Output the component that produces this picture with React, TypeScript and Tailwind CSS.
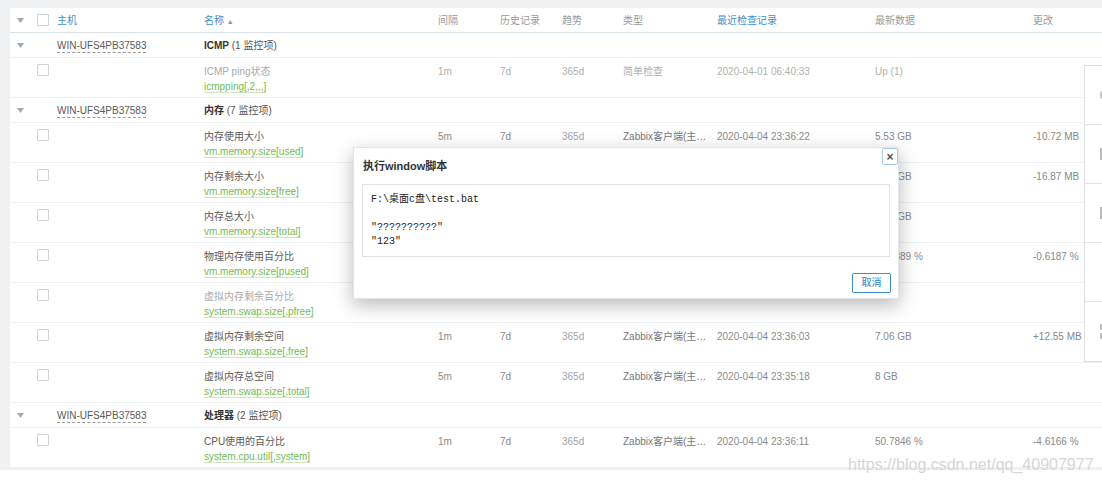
import React from 'react'

// 11 列：折叠箭头 / 勾选 / 主机 / 名称 / 间隔 / 历史 / 趋势 / 类型 / 最近检查 / 最新数据 / 更改
const COLS = 'grid grid-cols-[20px_27px_147px_234px_62px_62px_61px_94px_158px_158px_1fr]'

type Item = {
  kind: 'item'
  name: string
  key: string
  interval?: string
  history?: string
  trends?: string
  type?: string
  last?: string
  value?: string
  change?: string
  dim?: boolean
}
type Group = { kind: 'group'; title: string; count: string }

const ROWS: (Item | Group)[] = [
  { kind: 'group', title: 'ICMP', count: '(1 监控项)' },
  {
    kind: 'item', name: 'ICMP ping状态', key: 'icmpping[,2,,,]', interval: '1m', history: '7d', trends: '365d',
    type: '简单检查', last: '2020-04-01 06:40:33', value: 'Up (1)', dim: true,
  },
  { kind: 'group', title: '内存', count: '(7 监控项)' },
  {
    kind: 'item', name: '内存使用大小', key: 'vm.memory.size[used]', interval: '5m', history: '7d', trends: '365d',
    type: 'Zabbix客户端(主…', last: '2020-04-04 23:36:22', value: '5.53 GB', change: '-10.72 MB',
  },
  {
    kind: 'item', name: '内存剩余大小', key: 'vm.memory.size[free]', interval: '1m', history: '7d', trends: '365d',
    type: 'Zabbix客户端(主…', last: '2020-04-04 23:36:04', value: '2.47 GB', change: '-16.87 MB',
  },
  {
    kind: 'item', name: '内存总大小', key: 'vm.memory.size[total]', interval: '5m', history: '7d', trends: '365d',
    type: 'Zabbix客户端(主…', last: '2020-04-04 23:35:22', value: '7.99 GB',
  },
  {
    kind: 'item', name: '物理内存使用百分比', key: 'vm.memory.size[pused]', interval: '1m', history: '7d', trends: '365d',
    type: 'Zabbix客户端(主…', last: '2020-04-04 23:36:05', value: '69.1389 %', change: '-0.6187 %',
  },
  { kind: 'item', name: '虚拟内存剩余百分比', key: 'system.swap.size[,pfree]', dim: true },
  {
    kind: 'item', name: '虚拟内存剩余空间', key: 'system.swap.size[,free]', interval: '1m', history: '7d', trends: '365d',
    type: 'Zabbix客户端(主…', last: '2020-04-04 23:36:03', value: '7.06 GB', change: '+12.55 MB',
  },
  {
    kind: 'item', name: '虚拟内存总空间', key: 'system.swap.size[,total]', interval: '5m', history: '7d', trends: '365d',
    type: 'Zabbix客户端(主…', last: '2020-04-04 23:35:18', value: '8 GB',
  },
  { kind: 'group', title: '处理器', count: '(2 监控项)' },
  {
    kind: 'item', name: 'CPU使用的百分比', key: 'system.cpu.util[,system]', interval: '1m', history: '7d', trends: '365d',
    type: 'Zabbix客户端(主…', last: '2020-04-04 23:36:11', value: '50.7846 %', change: '-4.6166 %',
  },
]

function Arrow() {
  return (
    <svg width="7" height="5" viewBox="0 0 7 5" className="block">
      <path d="M0 0 L7 0 L3.5 5 Z" fill="#a5a9ad" />
    </svg>
  )
}

function Box() {
  return <div className="w-[12px] h-[12px] border border-[#ccd3d9] rounded-[1px] bg-white" />
}

function HeaderRow() {
  return (
    <div className={`${COLS} h-[25px] items-center border-b border-[#dbe3ea] text-[#9a9a9a]`}>
      <div className="flex justify-center">
        <Arrow />
      </div>
      <div className="pl-[7px]">
        <Box />
      </div>
      <div className="text-[#3f8fce]">主机</div>
      <div className="text-[#3f8fce]">
        名称 <span className="text-[7px] text-[#8b9aa6]">▲</span>
      </div>
      <div>间隔</div>
      <div>历史记录</div>
      <div>趋势</div>
      <div>类型</div>
      <div className="text-[#3f8fce]">最近检查记录</div>
      <div>最新数据</div>
      <div>更改</div>
    </div>
  )
}

function GroupRow({ row }: { row: Group }) {
  return (
    <div className={`${COLS} h-[25px] items-center border-b border-[#eef0f2]`}>
      <div className="flex justify-center">
        <Arrow />
      </div>
      <div />
      <div>
        <span className="text-[#5a5a5a] underline decoration-dashed decoration-[#999] underline-offset-[3px]">
          WIN-UFS4PB37583
        </span>
      </div>
      <div className="col-span-8 text-[#555]">
        <b className="text-[#333]">{row.title}</b> {row.count}
      </div>
    </div>
  )
}

function ItemRow({ row }: { row: Item }) {
  const soft = row.dim ? 'text-[#b0b0b0]' : 'text-[#8a8a8a]'
  return (
    <div className={`${COLS} h-[40px] pt-[6px] leading-[15px] border-b border-[#eef0f2] whitespace-nowrap ${soft}`}>
      <div />
      <div className="pl-[7px]">
        <Box />
      </div>
      <div />
      <div>
        <div className={row.dim ? 'text-[#aaa]' : 'text-[#5a5a5a]'}>{row.name}</div>
        <div>
          <span className="text-[#72bb52] underline decoration-[#cde6c0] underline-offset-[2px]">{row.key}</span>
        </div>
      </div>
      <div>{row.interval}</div>
      <div>{row.history}</div>
      <div className={row.dim ? '' : 'text-[#a3a3a3]'}>{row.trends}</div>
      <div className={row.dim ? '' : 'text-[#777]'}>{row.type}</div>
      <div>{row.last}</div>
      <div>{row.value}</div>
      <div className="text-[#888]">{row.change}</div>
    </div>
  )
}

function ScriptDialog() {
  return (
    <div className="absolute left-[353px] top-[147px] w-[546px] h-[152px] bg-white border border-[#e3e6e9] shadow-[0_6px_18px_rgba(0,0,0,0.28)]">
      <button className="absolute right-0 top-0 w-[16px] h-[17px] flex items-center justify-center border border-[#a8cbe9] rounded-[2px] bg-white text-[#555] text-[12px] font-bold leading-none">
        ×
      </button>
      <div className="px-[9px] pt-[9px] text-[11px] font-bold text-[#333] leading-[18px]">执行window脚本</div>
      <div className="mx-[8px] mt-[9px] h-[73px] border border-[#dfe3e6] px-[8px] pt-[8px] font-['Liberation_Mono','Noto_Sans_CJK_SC',monospace] text-[10px] leading-[14px] text-[#222] whitespace-pre">
        {'F:\\桌面c盘\\test.bat\n\n"??????????"\n"123"'}
      </div>
      <div className="flex justify-end px-[7px] pt-[16px]">
        <button className="w-[39px] h-[20px] border border-[#3f8fce] rounded-[2px] text-[#2f7fc0] text-[10px] leading-none bg-white">
          取消
        </button>
      </div>
    </div>
  )
}

function SidePanel() {
  return (
    <div className="absolute left-[1084px] top-[65px] w-[40px] border border-[#dedede] bg-white">
      {[0, 1, 2, 3, 4].map((i) => (
        <div key={i} className="h-[59px] border-b border-[#e3e3e3] last:border-b-0 flex items-center pl-[15px]">
          {i === 0 && <div className="w-[3px] h-[8px] rounded-l-full border-l-2 border-[#c9c9c9]" />}
          {(i === 1 || i === 2) && <div className="w-[4px] h-[12px] bg-[#bdbdbd]" />}
          {i === 4 && (
            <div className="flex flex-col gap-[3px]">
              <div className="w-[3px] h-[6px] bg-[#c2c2c2]" />
              <div className="w-[3px] h-[6px] bg-[#c2c2c2]" />
            </div>
          )}
        </div>
      ))}
    </div>
  )
}

export default function App() {
  return (
    <div className="relative w-[1102px] h-[484px] overflow-hidden bg-white font-['Liberation_Sans','Noto_Sans_CJK_SC',sans-serif] text-[10px]">
      <div className="bg-[#f0f1f2] pl-[10px] pt-[8px] pb-[2px]">
        <div className="bg-white">
          <HeaderRow />
          {ROWS.map((row, i) =>
            row.kind === 'group' ? <GroupRow key={i} row={row} /> : <ItemRow key={i} row={row} />,
          )}
        </div>
      </div>

      <SidePanel />
      <ScriptDialog />

      {/* 水印 */}
      <div className="absolute left-[848px] top-[455px] text-[16px] leading-[20px] text-[#d6d6d6] select-none">
        https://blog.csdn.net/qq_40907977
      </div>
    </div>
  )
}
